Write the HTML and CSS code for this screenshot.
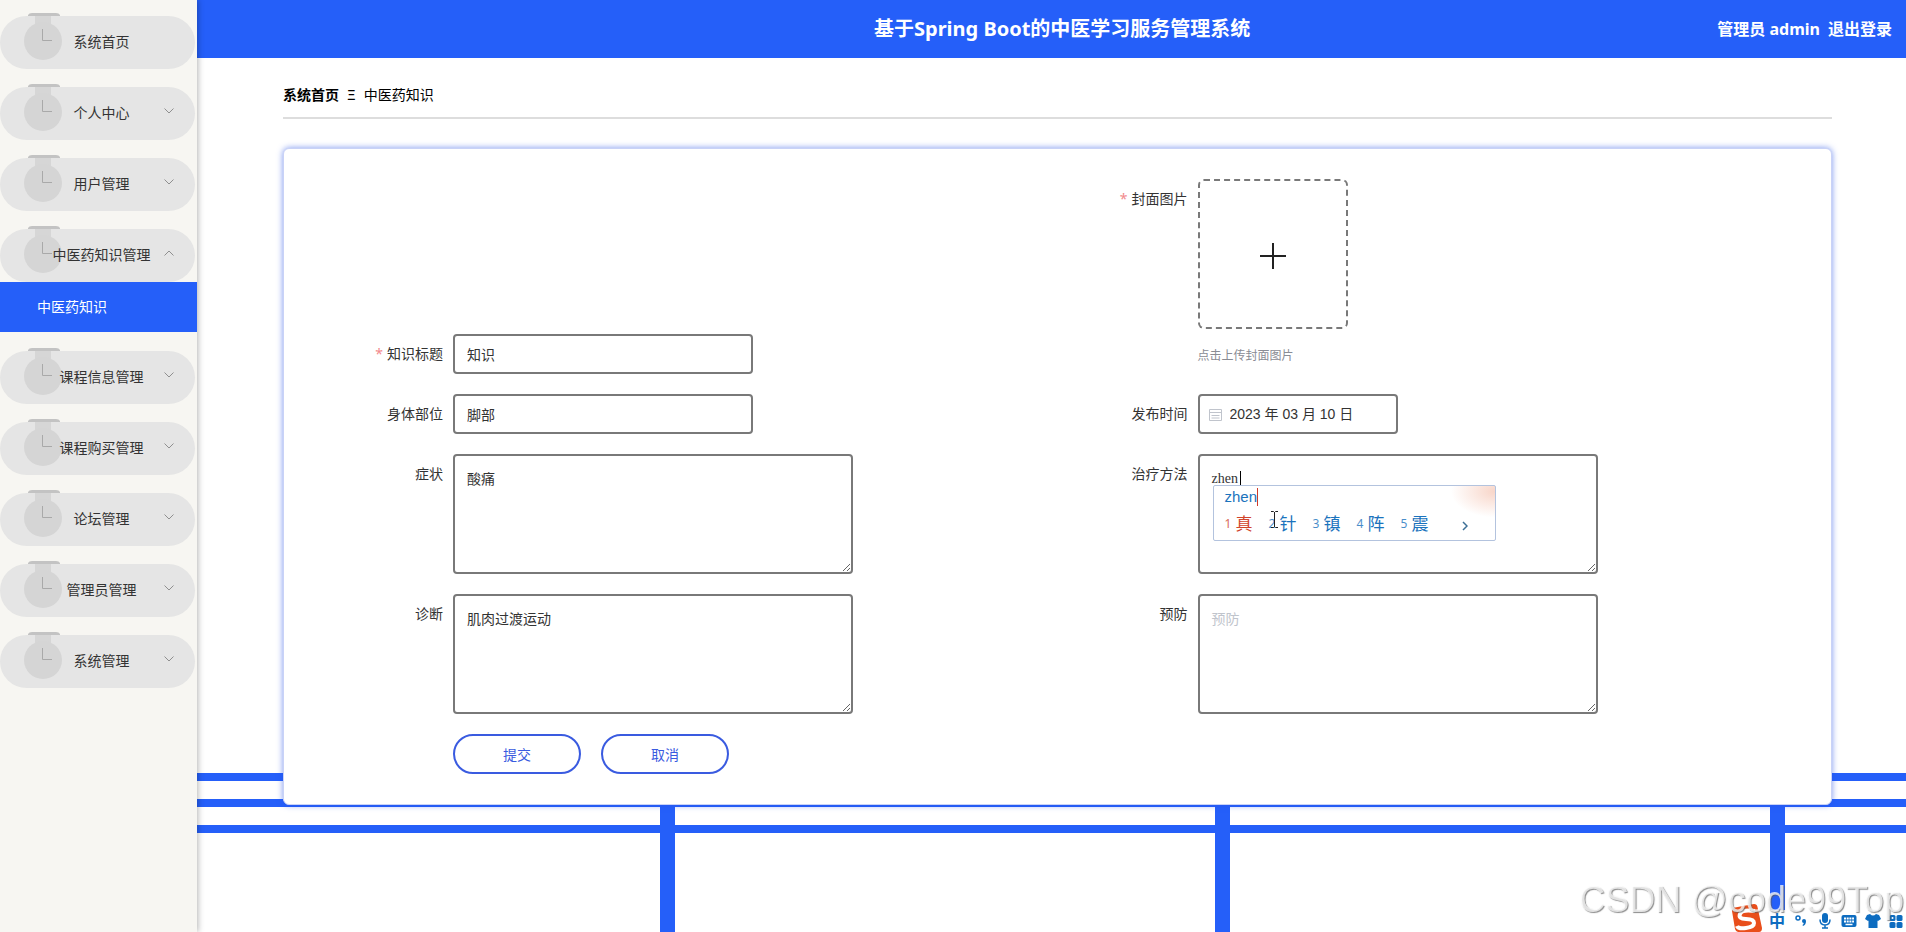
FILE: index.html
```html
<!DOCTYPE html>
<html lang="zh-CN">
<head>
<meta charset="utf-8">
<title>基于Spring Boot的中医学习服务管理系统</title>
<link rel="stylesheet" href="styles.css">
</head>
<body>
<svg class="defs" aria-hidden="true">
  <symbol id="clock" viewBox="0 0 38 50">
    <path d="M11 2h16v14H11z" fill="#d6d6d6"/>
    <path d="M4 2q1-2 4-2h24q3 0 4 2v1H4z" fill="#c3c3c3"/>
    <circle cx="19" cy="28" r="19" fill="#d5d5d5"/>
    <path d="M18.500 16v11.500H28" fill="none" stroke="#a9a9a9"/>
  </symbol>
  <symbol id="chevron" viewBox="0 0 10 10">
    <path d="M.5 2.500 5 7l4.500-4.500" fill="none" stroke="#8f8f8f"/>
  </symbol>
</svg>
<div class="app">
  <aside class="sidebar">
    <nav>
      <ul class="menu">
        <li><a class="pill" href="#"><svg class="clock"><use href="#clock"/></svg><span>系统首页</span></a></li>
        <li><a class="pill" href="#"><svg class="clock"><use href="#clock"/></svg><span>个人中心</span><svg class="chevron"><use href="#chevron"/></svg></a></li>
        <li><a class="pill" href="#"><svg class="clock"><use href="#clock"/></svg><span>用户管理</span><svg class="chevron"><use href="#chevron"/></svg></a></li>
        <li>
          <a class="pill" href="#"><svg class="clock"><use href="#clock"/></svg><span>中医药知识管理</span><svg class="chevron open"><use href="#chevron"/></svg></a>
          <a class="submenu" href="#">中医药知识</a>
        </li>
        <li><a class="pill" href="#"><svg class="clock"><use href="#clock"/></svg><span>课程信息管理</span><svg class="chevron"><use href="#chevron"/></svg></a></li>
        <li><a class="pill" href="#"><svg class="clock"><use href="#clock"/></svg><span>课程购买管理</span><svg class="chevron"><use href="#chevron"/></svg></a></li>
        <li><a class="pill" href="#"><svg class="clock"><use href="#clock"/></svg><span>论坛管理</span><svg class="chevron"><use href="#chevron"/></svg></a></li>
        <li><a class="pill" href="#"><svg class="clock"><use href="#clock"/></svg><span>管理员管理</span><svg class="chevron"><use href="#chevron"/></svg></a></li>
        <li><a class="pill" href="#"><svg class="clock"><use href="#clock"/></svg><span>系统管理</span><svg class="chevron"><use href="#chevron"/></svg></a></li>
      </ul>
    </nav>
  </aside>
  <div class="page">
    <header class="topbar">
      <h1>基于Spring Boot的中医学习服务管理系统</h1>
      <div class="user"><span>管理员 admin</span><a href="#">退出登录</a></div>
    </header>
    <main class="content">
      <nav class="crumbs"><a href="#">系统首页</a><span>Ξ</span><span>中医药知识</span></nav>
      <form class="card">
        <div class="field low">
          <label class="required" for="title">知识标题</label>
          <input class="box text" id="title" type="text" value="知识">
        </div>
        <div class="field">
          <label class="required" for="cover">封面图片</label>
          <div>
            <button class="upload" id="cover" type="button" aria-label="上传封面图片">
              <svg width="26" height="26" viewBox="0 0 26 26"><path d="M13 0v26M0 13h26" stroke="#222" stroke-width="2"/></svg>
            </button>
            <p class="hint">点击上传封面图片</p>
          </div>
        </div>
        <div class="field">
          <label for="part">身体部位</label>
          <input class="box text" id="part" type="text" value="脚部">
        </div>
        <div class="field">
          <label for="date">发布时间</label>
          <div class="box date">
            <svg width="13" height="13" viewBox="0 0 13 13" fill="none" stroke="#c0c4cc"><path d="M.5 1.500h12v11H.5zM.5 4.500h12M2.500 7.500h8M2.500 10h8"/></svg>
            <input id="date" type="text" value="2023 年 03 月 10 日">
          </div>
        </div>
        <div class="field">
          <label for="symptom">症状</label>
          <textarea class="box area" id="symptom">酸痛</textarea>
        </div>
        <div class="field">
          <label for="cure">治疗方法</label>
          <div class="ime-anchor">
            <textarea class="box area composing" id="cure">zhen</textarea>
            <i class="caret"></i>
            <div class="ime">
              <div class="ime-input">zhen</div>
              <ol class="candidates">
                <li class="first"><small>1</small>真</li><li><small>2</small>针</li><li><small>3</small>镇</li><li><small>4</small>阵</li><li><small>5</small>震</li>
              </ol>
              <svg class="ime-next" width="6" height="10" viewBox="0 0 6 10"><path d="M1 1l4 4-4 4" fill="none" stroke="#3c6f96" stroke-width="1.500"/></svg>
              <svg class="pointer" width="9" height="17" viewBox="0 0 9 17"><path d="M1 .5h2.500l1 1 1-1H8M4.500 1v15M1 16.500h2.500l1-1 1 1H8" fill="none" stroke="#222"/></svg>
            </div>
          </div>
        </div>
        <div class="field">
          <label for="diagnosis">诊断</label>
          <textarea class="box area" id="diagnosis">肌肉过渡运动</textarea>
        </div>
        <div class="field">
          <label for="prevent">预防</label>
          <textarea class="box area empty" id="prevent" placeholder="预防"></textarea>
        </div>
        <div class="actions">
          <button type="submit">提交</button>
          <button type="button">取消</button>
        </div>
      </form>
    </main>
  </div>
</div>
<div class="tray">
  <svg class="sogou" width="32" height="28" viewBox="0 0 32 28"><path d="M1 7q0-3 3-3.500L23 0q3 0 3.500 3L31 24q0 4-3 4H7q-2 0-3-3z" fill="#e94e1b"/><path d="M24 7Q11 5 9 10t6 5 8 4-8 5-9-2" fill="none" stroke="#fff" stroke-width="4"/></svg>
  <span class="lang">中</span>
  <svg width="16" height="16" viewBox="0 0 16 16"><circle cx="5" cy="5" r="2" fill="none" stroke="#0d6cc0" stroke-width="1.500"/><path d="M9 8a2 2 0 1 1 4 0q0 4-3 5l-.5-1q1-.5 1.300-2Q9 10 9 8z" fill="#0d6cc0"/></svg>
  <svg width="16" height="16" viewBox="0 0 16 16"><rect x="5" y="0" width="6" height="10" rx="3" fill="#0d6cc0"/><path d="M3 6.500Q3 12 8 12t5-5.500M8 12v3M5 15h6" fill="none" stroke="#0d6cc0" stroke-width="1.500"/></svg>
  <svg width="16" height="16" viewBox="0 0 16 16"><rect x=".5" y="2" width="15" height="12" rx="2" fill="#0d6cc0"/><path d="M3 5.500h10M3 8.500h10" stroke="#fff" stroke-width="2" stroke-dasharray="2 .7"/><path d="M4.500 11.500h7" stroke="#fff" stroke-width="1.500"/></svg>
  <svg width="16" height="16" viewBox="0 0 16 16"><path d="M5 1q3 3 6 0l3 1 2 4-3 2-.5-.5V15h-9V7.500L3 8 0 6l2-4z" fill="#0d6cc0"/></svg>
  <svg width="14" height="16" viewBox="0 0 14 16" fill="#0d6cc0"><rect x=".5" y="2" width="6" height="6" rx="1.500"/><rect x="7.500" y="2" width="6" height="6" rx="1.500"/><rect x=".5" y="9" width="6" height="6" rx="1.500"/><rect x="7.500" y="9" width="6" height="6" rx="1.500"/><circle cx="3.500" cy="5" r="1" fill="#fff"/></svg>
</div>
<div class="watermark">CSDN @code99Top</div>
</body>
</html>
```
FILE: styles.css
```css
* { box-sizing: border-box; }

body {
  margin: 0;
  color: #333;
  font: 14px/20px "Noto Sans", "Noto Sans CJK SC", sans-serif;
  overflow: hidden;
}

a { color: inherit; text-decoration: none; }
button, input, textarea { font: inherit; color: inherit; }
.defs { position: absolute; width: 0; height: 0; }

.app { display: flex; min-height: 100vh; }

/* Sidebar */
.sidebar {
  position: relative;
  flex: none;
  width: 197px;
  background: #f7f6f2;
  box-shadow: 1px 0 6px rgba(0, 0, 0, .3);
}

.menu { list-style: none; margin: 0; padding: 16px 0; }
.menu li { margin-bottom: 18px; }

.pill {
  position: relative;
  display: flex;
  align-items: center;
  justify-content: center;
  height: 53px;
  margin-right: 2px;
  padding: 0 0 2px 8px;
  border-radius: 27px;
  background: #e5e5e5;
}

.pill span { position: relative; }

.clock {
  position: absolute;
  left: 24px;
  top: -3px;
  width: 38px;
  height: 50px;
}

.chevron {
  position: absolute;
  right: 21px;
  top: 19px;
  width: 10px;
  height: 10px;
}

.open { transform: rotate(180deg); }

.submenu {
  display: block;
  margin-bottom: 19px;
  padding-left: 37px;
  background: #255ff9;
  color: #fff;
  line-height: 50px;
}

/* Page */
.page {
  flex: 1;
  min-width: 0;
  background:
    linear-gradient(#255ff9, #255ff9) 0 773px / 100% 8px no-repeat,
    linear-gradient(#255ff9, #255ff9) 0 799px / 100% 8px no-repeat,
    linear-gradient(#255ff9, #255ff9) 0 825px / 100% 8px no-repeat,
    repeating-linear-gradient(90deg, transparent 0 463px, #255ff9 463px 478px, transparent 478px 555px) 0 799px / 100% 100% no-repeat,
    #fff;
}

.topbar {
  display: flex;
  align-items: center;
  height: 58px;
  padding: 0 14px 0 210px;
  background: #255ff9;
  color: #fff;
  font-weight: bold;
}

.topbar h1 {
  flex: 1;
  margin: 0;
  text-align: center;
  font-size: 20px;
  line-height: 28px;
}

.user { display: flex; gap: 8px; font-size: 16px; }

.content { padding: 28px 74px 0 86px; }

.crumbs {
  display: flex;
  gap: 8px;
  height: 33px;
  padding-bottom: 14px;
  border-bottom: 2px solid #ddd;
  color: #000;
  line-height: 18px;
}

.crumbs a { font-weight: bold; }

.card {
  display: grid;
  grid-template-columns: 1fr 1fr;
  gap: 20px 0;
  margin-top: 29px;
  padding: 30px 29px;
  border: 1px solid #c9d2f7;
  border-radius: 6px;
  background: #fff;
  box-shadow: 0 0 6px rgba(37, 80, 230, .6);
}

.field { display: flex; align-items: flex-start; }
.low { align-self: end; }

.field label {
  flex: none;
  width: 140px;
  padding-right: 10px;
  text-align: right;
  line-height: 40px;
}

.required::before { content: "*"; margin-right: 4px; color: #f2898c; }

.box {
  border: 2px solid #797979;
  border-radius: 4px;
  background: #fff;
  outline: 0;
}

.text { width: 300px; height: 40px; padding: 0 12px; }

.date {
  display: flex;
  align-items: center;
  gap: 8px;
  width: 200px;
  height: 40px;
  padding: 0 9px;
}

.date input {
  flex: 1;
  min-width: 0;
  padding: 0;
  border: 0;
  outline: 0;
  font-family: "Liberation Sans", "Noto Sans CJK SC", sans-serif;
}

.area {
  display: block;
  width: 400px;
  height: 120px;
  padding: 12px;
  line-height: 21px;
}

.composing { font-family: "Liberation Serif", serif; }
.empty::placeholder { color: #c0c4cc; }

.upload {
  display: grid;
  place-items: center;
  width: 150px;
  height: 150px;
  padding: 4px 0 0;
  border: 2px dashed #797979;
  border-radius: 6px;
  background: #fff;
}

.hint {
  margin: 16px 0 7px;
  color: #8a8c94;
  font-size: 12px;
  line-height: 22px;
}

.actions { display: flex; gap: 20px; padding-left: 140px; }

.actions button {
  width: 128px;
  height: 40px;
  padding: 2px 0 0;
  border: 2px solid #3a5be0;
  border-radius: 20px;
  background: #fff;
  color: #3a5be0;
}

/* Input method popup */
.ime-anchor { position: relative; }

.caret {
  position: absolute;
  left: 42px;
  top: 17px;
  width: 1px;
  height: 14px;
  background: #000;
}

.ime {
  position: absolute;
  left: 15px;
  top: 31px;
  width: 283px;
  height: 56px;
  padding: 2px 11px;
  border: 1px solid #b3c3de;
  border-radius: 2px;
  background: radial-gradient(ellipse 44px 26px at 100% 10%, #f8d5c8, #fff);
  color: #1b73bd;
}

.ime-input {
  width: max-content;
  border-right: 1px solid #d03a2a;
  font: 15px/18px "Liberation Sans", sans-serif;
}

.candidates {
  display: flex;
  margin: 0;
  padding: 6px 0 0;
  list-style: none;
  font-size: 17px;
  line-height: 24px;
}

.candidates li { display: flex; gap: 4px; width: 44px; }
.candidates small { font-size: 12px; opacity: .8; }
.candidates .first { color: #d1452c; }
.ime-next { position: absolute; right: 27px; top: 35px; }
.pointer { position: absolute; left: 56px; top: 25px; }

/* Desktop overlays */
.tray {
  position: fixed;
  right: 0;
  bottom: 0;
  display: flex;
  align-items: center;
  gap: 8px;
  height: 22px;
  padding: 0 3px 0 38px;
  background: #fff;
  color: #0d6cc0;
}

.sogou { position: absolute; left: 0; bottom: 0; }
.lang { font-size: 16px; font-weight: bold; }

.watermark {
  position: fixed;
  right: 2px;
  bottom: 10px;
  color: rgba(255, 255, 255, .75);
  font: 36px/44px "Liberation Sans", sans-serif;
  text-shadow: 1px 1px 1px rgba(90, 90, 90, .7);
}
```
